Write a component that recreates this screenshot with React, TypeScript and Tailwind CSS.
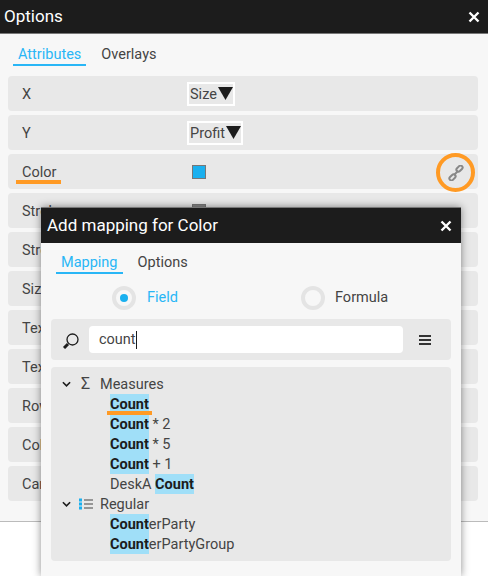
import React from "react";

const font = "font-['Roboto','Noto_Sans',sans-serif]";

function Hl({ children }: { children: React.ReactNode }) {
  return <span className="inline-block h-[20px] bg-[#a0dff8] font-bold text-[#1c1c1c]">{children}</span>;
}

function X({ className }: { className: string }) {
  return (
    <svg viewBox="0 0 12 12" className={className} fill="none" stroke="white" strokeWidth="2.4">
      <path d="M1.5 1.5 L10.5 10.5 M10.5 1.5 L1.5 10.5" />
    </svg>
  );
}

function Row({ label, children }: { label: string; children?: React.ReactNode }) {
  return (
    <div className="flex h-[35px] items-center rounded bg-[#e8e8e8] pl-[14px]">
      <span className="w-[165px] pt-[2px] text-[14.5px] text-[#444]">{label}</span>
      {children}
    </div>
  );
}

function Drop({ text }: { text: string }) {
  return (
    <span className="flex h-[24px] items-center border-[2px] border-white bg-[#e8e8e8] pl-[1px] text-[14.5px] text-[#444]">
      <span className="pt-[2px]">{text}</span>
      <svg viewBox="0 0 15 13" className="ml-px h-[13px] w-[15px]">
        <path d="M0 0 H15 L7.5 13 Z" fill="#1c1c1c" />
      </svg>
    </span>
  );
}

function Sw({ c }: { c: string }) {
  return <span className="ml-[5px] block h-[14px] w-[14px] border border-[#777]" style={{ background: c }} />;
}

function Node({ children }: { children: React.ReactNode }) {
  return <div className="h-[20px] pl-[59px] text-[14.5px] leading-[22px] text-[#444]">{children}</div>;
}

export default function App() {
  return (
    <div className={`relative h-[576px] w-[488px] overflow-hidden bg-white ${font}`}>
      <div className="h-[522px] border-b border-[#bbb] bg-[#f7f7f7]">
        <div className="flex h-[34px] items-center justify-between border-b border-[#777] bg-[#1c1c1c] pl-[4px] pr-[8px]">
          <span className="text-[17px] text-white">Options</span>
          <X className="h-[12px] w-[12px]" />
        </div>
        <div className="flex gap-[15px] pl-[13px] pt-[10px] text-[14.5px] leading-[22px]">
          <span className="h-[22px] border-b-2 border-[#29b6f6] px-[5px] text-[#29b6f6]">Attributes</span>
          <span className="text-[#444]">Overlays</span>
        </div>
        <div className="mx-[8px] mt-[10px] flex w-[470px] flex-col gap-[4px]">
          <Row label="X"><Drop text="Size" /></Row>
          <Row label="Y"><Drop text="Profit" /></Row>
          <div className="relative">
            <Row label="Color"><Sw c="#1ab0ef" /></Row>
            <div className="absolute left-[8px] top-[26px] h-[4px] w-[45px] bg-[#ff9a24]" />
            <div className="absolute left-[428px] top-[-1px] flex h-[39px] w-[39px] items-center justify-center rounded-full border-[4px] border-[#ff9a24]">
              <svg viewBox="0 0 16 16" className="h-[16px] w-[16px]" fill="none" stroke="#888" strokeWidth="2">
                <rect x="8" y="1.6" width="7" height="4" rx="2" transform="rotate(-45 11.5 3.6)" />
                <rect x="1" y="10.4" width="7" height="4" rx="2" transform="rotate(-45 4.5 12.4)" />
                <path d="M6 10 L10 6" />
              </svg>
            </div>
          </div>
          <Row label="Stroke"><Sw c="#888" /></Row>
          <Row label="Stroke" />
          <Row label="Size" />
          <Row label="Text" />
          <Row label="Text" />
          <Row label="Row" />
          <Row label="Col" />
          <Row label="Car" />
        </div>
      </div>

      <div className="absolute left-[41px] top-[207px] h-[369px] w-[420px] bg-[#f7f7f7] shadow-[0_0_8px_rgba(0,0,0,0.45)]">
        <div className="flex h-[36px] items-center justify-between border-t border-[#777] bg-[#1c1c1c] pl-[6px] pr-[9px]">
          <span className="text-[17px] text-white">Add mapping for Color</span>
          <X className="h-[12px] w-[12px]" />
        </div>
        <div className="flex gap-[15px] pl-[15px] pt-[9px] text-[14.5px] leading-[22px]">
          <span className="h-[22px] border-b-2 border-[#29b6f6] px-[5px] text-[#29b6f6]">Mapping</span>
          <span className="text-[#444]">Options</span>
        </div>
        <div className="mt-px flex h-[34px] items-center pl-[71px] pt-[11px] text-[14.5px]">
          <span className="flex h-[24px] w-[24px] items-center justify-center rounded-full border-[4px] border-[#e4e4e4]">
            <span className="h-[8px] w-[8px] rounded-full bg-[#1ab0ef]" />
          </span>
          <span className="ml-[11px] w-[154px] text-[#29b6f6]">Field</span>
          <span className="h-[24px] w-[24px] rounded-full border-[4px] border-[#e4e4e4]" />
          <span className="ml-[10px] text-[#444]">Formula</span>
        </div>
        <div className="mx-[10px] mt-[10px] flex h-[41px] items-center rounded bg-[#e8e8e8]">
          <svg viewBox="0 0 17 16" className="ml-[11px] mt-[3px] h-[16px] w-[17px]" fill="none" stroke="#1c1c1c">
            <circle cx="10.5" cy="6.5" r="5.5" strokeWidth="1.3" />
            <path d="M6 11 L2 15" strokeWidth="3" />
          </svg>
          <div className="ml-[10px] flex h-[27px] w-[314px] items-center rounded bg-white pl-[10px] text-[14.5px] text-[#444]">
            count<span className="h-[18px] w-px bg-[#1c1c1c]" />
          </div>
          <span className="ml-[16px] flex w-[12px] flex-col gap-[2px]">
            <span className="h-[2px] bg-[#333]" />
            <span className="h-[2px] bg-[#333]" />
            <span className="h-[2px] bg-[#333]" />
          </span>
        </div>
        <div className="mx-[10px] mt-[7px] h-[194px] rounded bg-[#e8e8e8] pt-[7px]">
          <div className="flex h-[20px] items-center text-[14.5px] text-[#444]">
            <svg viewBox="0 0 10 6" className="ml-[11px] h-[6px] w-[9px]" fill="none" stroke="#1c1c1c" strokeWidth="1.8"><path d="M1 1 L5 5 L9 1" /></svg>
            <span className="ml-[10px] w-[19px] text-[16px] leading-[20px]">Σ</span>
            <span className="pt-[2px]">Measures</span>
          </div>
          <div className="relative">
            <Node><Hl>Count</Hl></Node>
            <div className="absolute left-[56px] top-[17px] h-[4px] w-[45px] bg-[#ff9a24]" />
          </div>
          <Node><Hl>Count</Hl> * 2</Node>
          <Node><Hl>Count</Hl> * 5</Node>
          <Node><Hl>Count</Hl> + 1</Node>
          <Node>DeskA <Hl>Count</Hl></Node>
          <div className="flex h-[20px] items-center text-[14.5px] text-[#444]">
            <svg viewBox="0 0 10 6" className="ml-[11px] h-[6px] w-[9px]" fill="none" stroke="#1c1c1c" strokeWidth="1.8"><path d="M1 1 L5 5 L9 1" /></svg>
            <svg viewBox="0 0 14 12" className="ml-[8px] h-[12px] w-[14px]">
              <rect x="0" y="0.5" width="3" height="3" fill="#1ab0ef" />
              <rect x="0" y="4.5" width="3" height="3" fill="#1ab0ef" />
              <rect x="0" y="8.5" width="3" height="3" fill="#1ab0ef" />
              <path d="M5 2 H14 M5 6 H14 M5 10 H14" stroke="#444" strokeWidth="1" />
            </svg>
            <span className="ml-[7px] pt-[2px]">Regular</span>
          </div>
          <Node><Hl>Count</Hl><span>erParty</span></Node>
          <Node><Hl>Count</Hl><span>erPartyGroup</span></Node>
        </div>
      </div>
    </div>
  );
}
